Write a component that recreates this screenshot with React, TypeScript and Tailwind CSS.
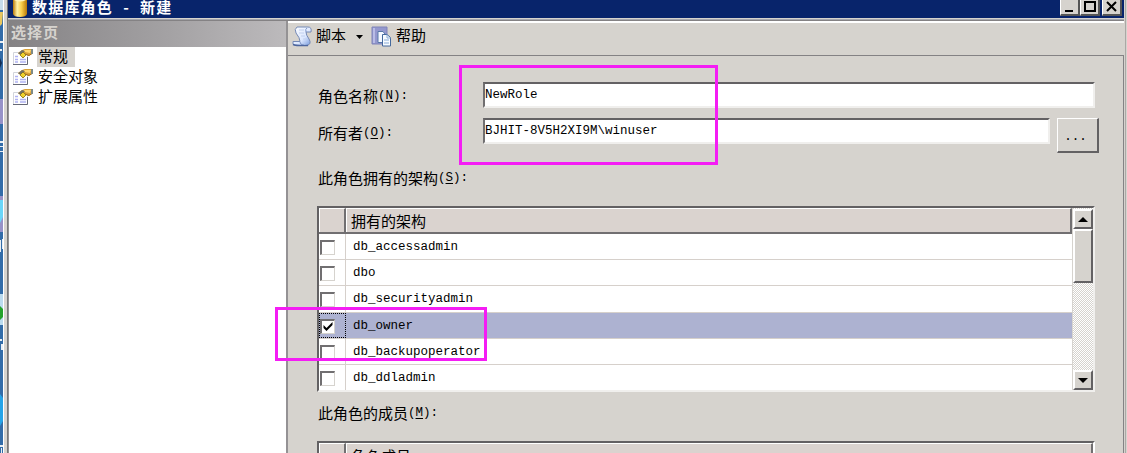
import type { ReactNode } from "react"

const pages = ["常规", "安全对象", "扩展属性"]

const schemas = [
  { name: "db_accessadmin", owned: false },
  { name: "dbo", owned: false },
  { name: "db_securityadmin", owned: false },
  { name: "db_owner", owned: true },
  { name: "db_backupoperator", owned: false },
  { name: "db_ddladmin", owned: false },
]

function Mono({ children }: { children: ReactNode }) {
  return (
    <span className="font-['Liberation_Mono','Noto_Sans_CJK_SC',monospace] text-[12.5px] whitespace-pre">
      {children}
    </span>
  )
}

function Label({ text, hotkey }: { text: string; hotkey: string }) {
  return (
    <div className="flex h-5 items-center whitespace-pre">
      {text}
      <Mono>
        (<span className="underline underline-offset-2">{hotkey}</span>):
      </Mono>
    </div>
  )
}

function DatabaseIcon() {
  return (
    <svg width="16" height="18" viewBox="0 0 16 18">
      <defs>
        <linearGradient id="gold">
          <stop offset="0" stopColor="#b97a08" />
          <stop offset="0.3" stopColor="#fff3a8" />
          <stop offset="0.6" stopColor="#fbd04c" />
          <stop offset="1" stopColor="#b87908" />
        </linearGradient>
      </defs>
      <path d="M1 0H15V14Q14 17 8 17Q2 17 1 14Z" fill="url(#gold)" />
      <path d="M2 0Q8 3 14 0Z" fill="#fff4ba" />
    </svg>
  )
}

function PageIcon() {
  return (
    <svg width="21" height="18" viewBox="0 0 21 18">
      <path d="M.5 4.500H14.500V16.500H.5Z" fill="#fff" stroke="#d2d4dc" />
      <path d="M0 16.500H14.500V9" fill="none" stroke="#666876" />
      <path d="M2 8.500H5M2 11.500H5M2 14H5M7 11.500H13M7 14H13" stroke="#b0b2f2" strokeWidth="1.500" />
      <path d="M5 5L9 2L12 1H19V6L16 8L13 7L10 10L7 7Z" fill="#d9a23a" />
      <path d="M5 5.500L9 2L12 3L9 7Z" fill="#6f7069" />
      <path d="M11 2H18L17 5L12 4Z" fill="#ffd66e" />
      <path d="M12 6L16 7.500L19 5.500" fill="none" stroke="#a06c20" />
      <path d="M7 7L10 4L13 7L10 10Z" fill="#f0d22c" stroke="#77651c" strokeWidth=".7" />
      <path d="M18 1H20V6H18Z" fill="#7d8a86" />
    </svg>
  )
}

function ScriptIcon() {
  return (
    <svg width="21" height="21" viewBox="0 0 21 21">
      <defs>
        <linearGradient id="paper" x2="1" y2="1">
          <stop stopColor="#fff" />
          <stop offset=".6" stopColor="#dbe7ff" />
          <stop offset="1" stopColor="#6f93d8" />
        </linearGradient>
      </defs>
      <path
        d="M5 1H16Q20 1 19 6H14Q14 9 17 13Q20 18 15 19.500H3Q0 19 1 15.500H8Q8 12 4 7Q2 3 5 1Z"
        fill="url(#paper)"
        stroke="#7589b5"
      />
      <path d="M14 6Q13 3 15 2M8 16Q8 19 12 19" fill="none" stroke="#7f96c8" />
      <path d="M7 4H12M7 7H12M9 10H13M11 13H15" fill="none" stroke="#c0cfee" />
      <path d="M1 18.500Q5 20 16 19.500" fill="none" stroke="#4c659d" strokeWidth="1.500" />
    </svg>
  )
}

function HelpIcon() {
  return (
    <svg width="21" height="21" viewBox="0 0 21 21">
      <path d="M1 1H16V18H1Z" fill="#9498ce" stroke="#7f83b9" />
      <path d="M2 2H4V17H2Z" fill="#b9bce6" />
      <path d="M7 5.500H12L14 8V16.500H7Z" fill="#f4f8ff" stroke="#5878a9" />
      <path d="M11.500 8.500H16L19.500 11.500V20H11.500Z" fill="#f7fbff" stroke="#44699d" />
      <path d="M16 8.500V12H19.500M13 14H18M13 17H18" fill="none" stroke="#8aabd6" />
    </svg>
  )
}

function CaptionButton({ children }: { children: ReactNode }) {
  return (
    <div className="h-4 w-5 border-r-2 border-b-2 border-l border-r-[#555] border-b-[#555] border-l-white bg-[#d6d3ce]">
      <svg width="17" height="14" viewBox="0 0 17 14" fill="none" stroke="#000" strokeWidth="2">
        {children}
      </svg>
    </div>
  )
}

function ScrollButton({ down = false }: { down?: boolean }) {
  return (
    <div className="flex h-5 w-5 shrink-0 items-center justify-center border-2 border-t-white border-r-[#636163] border-b-[#636163] border-l-white bg-[#d6d3ce]">
      <svg width="10" height="5" viewBox="0 0 10 5">
        <path d={down ? "M0 0H10L5 5Z" : "M0 5H10L5 0Z"} />
      </svg>
    </div>
  )
}

function CheckBox({ checked }: { checked: boolean }) {
  return (
    <div className="h-[15px] w-[15px] border-t-2 border-r border-b border-l-2 border-t-[#716f71] border-r-[#d6d3ce] border-b-[#d6d3ce] border-l-[#716f71] bg-white">
      {checked && (
        <svg width="12" height="12" viewBox="0 0 12 12">
          <path d="M1.500 4V7L4.500 10L10.500 4V1L4.500 7Z" />
        </svg>
      )}
    </div>
  )
}

function GridHeader({ title }: { title: string }) {
  return (
    <div className="flex h-[26px] shrink-0 border-b-2 border-[#716f71] bg-[#dad3cf]">
      <div className="w-[27px] border-t border-r-2 border-l border-t-white border-r-[#716f71] border-l-white" />
      <div className="flex flex-1 items-center border-t border-r-2 border-l border-t-white border-r-[#716f71] border-l-white pl-[4px]">
        {title}
      </div>
    </div>
  )
}

function TextField({ value, className }: { value: string; className: string }) {
  return (
    <div
      className={`${className} flex h-[26px] border-2 border-t-[#636163] border-r-[#f0efed] border-b-[#f0efed] border-l-[#716f71] bg-white`}
    >
      <span className="-mt-px leading-[18px]">
        <Mono>{value}</Mono>
      </span>
    </div>
  )
}

function Desktop() {
  return (
    <svg width="3" height="453" viewBox="0 0 3 453" className="shrink-0">
      <path fill="#336ca8" d="M0 0H3V453H0Z" />
      <path fill="#c7dcea" d="M0 0H3V10H0Z" />
      <path fill="#eac75e" d="M0 12H3L2 24L0 26Z" />
      <path fill="#e8eef4" d="M0 41H3V43H0ZM0 49H2V51H0ZM0 141H3V143H0ZM0 146H3V147H0ZM0 151H3V152H0ZM0 240H1V252H0ZM2 239H3V249H2ZM0 339H2V341H0ZM1 344H3V350H1ZM0 445H3V447H0ZM1 448H2V453H1Z" />
      <path fill="#142c51" d="M0 58L2 63L0 68Z" />
      <path fill="#9792c8" d="M0 99H3V124H0ZM0 196H3V232H0Z" />
      <path fill="#6bd6f8" d="M0 200H3V217L0 223Z" />
      <path fill="#bbdbef" d="M0 294H3V325H0Z" />
      <path fill="#25a22b" d="M0 306L3 309V317L0 320Z" />
      <path fill="#26a4e8" d="M0 394L3 398V421L0 426Z" />
    </svg>
  )
}

export default function App() {
  return (
    <div className="relative flex h-[453px] w-[1127px] overflow-hidden bg-[#d6d3ce] font-['Noto_Sans_CJK_SC',sans-serif] text-[15px] leading-5 text-black">
      <Desktop />
      <div className="w-[5px] shrink-0 border-r border-l border-r-[#777] border-l-white bg-[#d6d3ce]" />

      <div className="flex w-[1116px] shrink-0 flex-col">
        {/* Title bar */}
        <header className="flex h-[18px] shrink-0 items-start bg-[#08246b] pl-1 text-white">
          <DatabaseIcon />
          <h1 className="ml-[4px] flex leading-[14px] font-bold tracking-[1.2px] whitespace-pre">
            数据库角色
            <span className="w-[27px] text-center">-</span>
            新建
          </h1>
          <div className="ml-auto flex pr-[2px]">
            <CaptionButton><path d="M4 11H12" /></CaptionButton>
            <CaptionButton><path d="M4 2H14V11H4Z" /></CaptionButton>
            <div className="ml-[2px]">
              <CaptionButton><path d="M4 2L13 11M13 2L4 11" /></CaptionButton>
            </div>
          </div>
        </header>
        <div className="h-[3px] shrink-0 border-t border-b border-t-[#d6d3ce] border-b-[#848284] bg-[#a5a6ad]" />

        <div className="flex min-h-0 flex-1">
          {/* Page list */}
          <aside className="w-[280px] shrink-0 border-r-2 border-l border-r-[#949294] border-l-[#949294] bg-white">
            <div className="h-[26px] bg-linear-to-r from-[#848284] to-[#bcbabc] pl-[2px] leading-[21px] font-bold tracking-[1px] text-[#d6d3ce]">
              选择页
            </div>
            <ul>
              {pages.map((page, i) => (
                <li key={page} className="flex h-5 items-center pl-[4px]">
                  <PageIcon />
                  <span className={i === 0 ? "ml-[3px] h-5 bg-[#d6d3ce] pr-[7px] pl-px leading-[17px]" : "ml-[4px] h-5 leading-[17px]"}>
                    {page}
                  </span>
                </li>
              ))}
            </ul>
          </aside>

          <main className="flex flex-1 flex-col">
            {/* Toolbar */}
            <div className="flex h-[34px] shrink-0 items-center border-t-2 border-white pb-[5px] pl-1">
              <ScriptIcon />
              <span className="-mt-[3px] ml-[3px]">脚本</span>
              <svg width="7" height="4" viewBox="0 0 7 4" className="ml-[10px]">
                <path d="M0 0H7L3.500 4Z" />
              </svg>
              <span className="ml-[8px] flex"><HelpIcon /></span>
              <span className="-mt-[3px] ml-[4px]">帮助</span>
            </div>

            <section className="flex flex-1 flex-col border-t border-r border-[#848284] pt-[26px] pl-[29px]">
              <div className="flex h-9 items-start">
                <div className="w-[166px] pt-[4px] pl-px"><Label text="角色名称" hotkey="N" /></div>
                <TextField value="NewRole" className="w-[612px]" />
              </div>
              <div className="flex h-[50px] items-start">
                <div className="w-[166px] pt-[5px] pl-px"><Label text="所有者" hotkey="O" /></div>
                <TextField value="BJHIT-8V5H2XI9M\winuser" className="w-[567px]" />
                <button className="ml-[7px] flex h-[35px] w-[42px] items-center justify-center border-t border-r-2 border-b-2 border-l border-t-white border-r-[#636163] border-b-[#636163] border-l-white pt-1 pr-1">
                  <Mono>...</Mono>
                </button>
              </div>
              <div className="pl-px"><Label text="此角色拥有的架构" hotkey="S" /></div>

              {/* Owned schemas */}
              <div className="mt-[18px] flex h-[186px] w-[778px] shrink-0 border-t-2 border-r-2 border-b-2 border-l-2 border-t-[#636163] border-r-[#f0efed] border-b-[#f0efed] border-l-[#636163] bg-white">
                <div className="flex flex-1 flex-col overflow-hidden">
                  <GridHeader title="拥有的架构" />
                  {schemas.map(({ name, owned }) => (
                    <div
                      key={name}
                      className={`flex h-[26.2px] shrink-0 border-b border-[#d6d0cb] ${owned ? "bg-[#adb2d1]" : ""}`}
                    >
                      <div
                        className={
                          owned
                            ? "w-[27px] border border-dotted border-black pt-[5px]"
                            : "w-[27px] border-r border-[#d6d0cb] pt-[6px] pl-px"
                        }
                      >
                        <CheckBox checked={owned} />
                      </div>
                      <span className="pl-[7px] leading-[20px]"><Mono>{name}</Mono></span>
                    </div>
                  ))}
                </div>
                <div className="flex w-[21px] shrink-0 flex-col border-l border-[#d6d3ce] bg-[repeating-conic-gradient(#fff_0_25%,#d6d3ce_0_50%)] bg-size-[2px_2px] pt-px">
                  <ScrollButton />
                  <div className="h-[54px] border-2 border-t-white border-r-[#636163] border-b-[#636163] border-l-white bg-[#d6d3ce]" />
                  <div className="mt-auto"><ScrollButton down /></div>
                </div>
              </div>

              <div className="mt-[11px] pl-px"><Label text="此角色的成员" hotkey="M" /></div>

              {/* Role members */}
              <div className="mt-[18px] h-[60px] w-[778px] shrink-0 border-t-2 border-r-2 border-l-2 border-t-[#636163] border-r-white border-l-[#636163]">
                <GridHeader title="角色成员" />
              </div>
            </section>
          </main>
        </div>
      </div>
      <div className="ml-px w-[2px] border-l border-[#aaa8a5]" />

      {/* Highlight frames */}
      <div className="absolute top-[65px] left-[459px] h-[100px] w-[259px] border-[3px] border-[#f41df4]" />
      <div className="absolute top-[307px] left-[275px] h-[54px] w-[212px] border-[3px] border-[#f41df4]" />
    </div>
  )
}
